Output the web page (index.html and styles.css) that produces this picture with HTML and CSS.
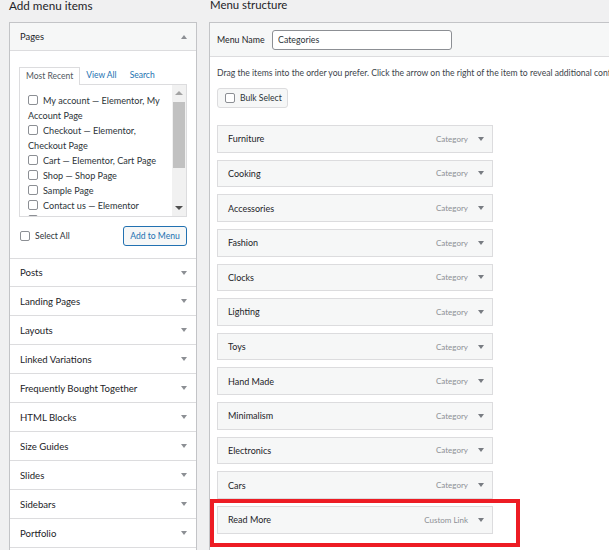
FILE: index.html
```html
<!DOCTYPE html>
<html>
<head>
<meta charset="utf-8">
<link rel="stylesheet" href="styles.css">
</head>
<body>
<div class="page">
  <div class="col-left">
    <h2 class="col-title">Add menu items</h2>
    <div class="acc">
      <div class="acc-head"><span>Pages</span><i class="tri up"></i></div>
      <div class="acc-body">
        <ul class="tabs">
          <li class="tab active">Most Recent</li>
          <li class="tab link">View All</li>
          <li class="tab link">Search</li>
        </ul>
        <div class="tab-panel">
          <ul class="checklist">
            <li><input type="checkbox" class="cb">My account — Elementor, My Account Page</li>
            <li><input type="checkbox" class="cb">Checkout — Elementor, Checkout Page</li>
            <li><input type="checkbox" class="cb">Cart — Elementor, Cart Page</li>
            <li><input type="checkbox" class="cb">Shop — Shop Page</li>
            <li><input type="checkbox" class="cb">Sample Page</li>
            <li><input type="checkbox" class="cb">Contact us — Elementor</li>
            <li><input type="checkbox" class="cb">Wishlist</li>
          </ul>
          <div class="scrollbar">
            <div class="sb-btn"><i class="sb-arrow up"></i></div>
            <div class="sb-thumb"></div>
            <div class="sb-space"></div>
            <div class="sb-btn"><i class="sb-arrow down"></i></div>
          </div>
        </div>
        <div class="actions">
          <label class="select-all"><input type="checkbox" class="cb">Select All</label>
          <button class="btn-add">Add to Menu</button>
        </div>
      </div>
      <div class="acc-row"><span>Posts</span><i class="tri"></i></div>
      <div class="acc-row"><span>Landing Pages</span><i class="tri"></i></div>
      <div class="acc-row"><span>Layouts</span><i class="tri"></i></div>
      <div class="acc-row"><span>Linked Variations</span><i class="tri"></i></div>
      <div class="acc-row"><span>Frequently Bought Together</span><i class="tri"></i></div>
      <div class="acc-row"><span>HTML Blocks</span><i class="tri"></i></div>
      <div class="acc-row"><span>Size Guides</span><i class="tri"></i></div>
      <div class="acc-row"><span>Slides</span><i class="tri"></i></div>
      <div class="acc-row"><span>Sidebars</span><i class="tri"></i></div>
      <div class="acc-row"><span>Portfolio</span><i class="tri"></i></div>
      <div class="acc-row"><span>Products</span><i class="tri"></i></div>
    </div>
  </div>
  <div class="col-right">
    <h2 class="col-title right">Menu structure</h2>
    <div class="menu-box">
      <div class="menu-head">
        <label class="menu-label">Menu Name</label>
        <input class="menu-name" type="text" value="Categories">
      </div>
      <div class="menu-body">
        <p class="hint">Drag the items into the order you prefer. Click the arrow on the right of the item to reveal additional configuration options.</p>
        <button class="bulk"><input type="checkbox" class="cb">Bulk Select</button>
        <ul class="menu-items">
          <li class="item"><span class="item-title">Furniture</span><span class="item-type">Category</span><i class="tri dark"></i></li>
          <li class="item"><span class="item-title">Cooking</span><span class="item-type">Category</span><i class="tri dark"></i></li>
          <li class="item"><span class="item-title">Accessories</span><span class="item-type">Category</span><i class="tri dark"></i></li>
          <li class="item"><span class="item-title">Fashion</span><span class="item-type">Category</span><i class="tri dark"></i></li>
          <li class="item"><span class="item-title">Clocks</span><span class="item-type">Category</span><i class="tri dark"></i></li>
          <li class="item"><span class="item-title">Lighting</span><span class="item-type">Category</span><i class="tri dark"></i></li>
          <li class="item"><span class="item-title">Toys</span><span class="item-type">Category</span><i class="tri dark"></i></li>
          <li class="item"><span class="item-title">Hand Made</span><span class="item-type">Category</span><i class="tri dark"></i></li>
          <li class="item"><span class="item-title">Minimalism</span><span class="item-type">Category</span><i class="tri dark"></i></li>
          <li class="item"><span class="item-title">Electronics</span><span class="item-type">Category</span><i class="tri dark"></i></li>
          <li class="item"><span class="item-title">Cars</span><span class="item-type">Category</span><i class="tri dark"></i></li>
          <li class="item marked"><span class="item-title">Read More</span><span class="item-type">Custom Link</span><i class="tri dark"></i><span class="highlight"></span></li>
        </ul>
      </div>
    </div>
  </div>
</div>
</body>
</html>
```

FILE: styles.css
```css
html, body {
  margin: 0;
  overflow: hidden;
}
body {
  width: 609px;
  height: 550px;
  background: #f0f0f1;
  font-family: Lato, "Noto Sans", sans-serif;
  color: #1d2327;
}
ul { list-style: none; margin: 0; padding: 0; }

.page {
  display: flex;
  align-items: flex-start;
  gap: 12px;
  padding-left: 9px;
}
.col-left { width: 188px; flex: none; }
.col-right { width: 640px; flex: none; }

.col-title {
  margin: 0;
  height: 22px;
  font-size: 11.7px;
  font-weight: 400;
  line-height: 10px;
  color: #1d2327;
  white-space: nowrap;
}
.col-title.right { padding-left: 1px; font-size: 11.4px; }

.cb {
  appearance: none;
  -webkit-appearance: none;
  box-sizing: border-box;
  width: 10px;
  height: 10px;
  margin: 0 5px 0 0;
  border: 1px solid #8c8f94;
  border-radius: 2px;
  background: #fff;
  vertical-align: -1px;
}

.tri {
  flex: none;
  width: 0;
  height: 0;
  border-left: 3.5px solid transparent;
  border-right: 3.5px solid transparent;
  border-top: 4px solid #8c8f94;
}
.tri.up {
  border-top: 0;
  border-bottom: 4px solid #8c8f94;
}
.tri.dark { border-top-color: #787c82; }

.acc {
  background: #fff;
  border: 1px solid #c3c4c7;
  border-bottom: 0;
}
.acc-head {
  box-sizing: border-box;
  height: 28px;
  background: #f6f7f7;
  border-bottom: 1px solid #dcdcde;
  display: flex;
  align-items: center;
  justify-content: space-between;
  padding: 0 9px 0 10px;
  font-size: 9.4px;
}
.acc-body {
  padding: 16px 9px 12px;
}
.tabs {
  display: flex;
  font-size: 8.5px;
  height: 17px;
  line-height: 16px;
}
.tab {
  padding: 0 6px;
  color: #2271b1;
}
.tab.active {
  color: #50575e;
  border: 1px solid #dcdcde;
  border-bottom: 0;
  background: #fff;
  box-sizing: border-box;
  height: 18px;
  margin-bottom: -1px;
  position: relative;
}
.tab.link + .tab.link { padding-left: 7px; }
.tab-panel {
  display: flex;
  height: 133px;
  box-sizing: border-box;
  border: 1px solid #dcdcde;
  overflow: hidden;
  background: #fff;
}
.checklist {
  flex: 1;
  padding: 8px 5px 0 8px;
  font-size: 9.1px;
  line-height: 15px;
  color: #2c3338;
}
.scrollbar {
  width: 14px;
  flex: none;
  display: flex;
  flex-direction: column;
  background: #f1f1f1;
}
.sb-btn {
  height: 16px;
  display: flex;
  align-items: center;
  justify-content: center;
}
.sb-arrow {
  width: 0;
  height: 0;
  border-left: 4px solid transparent;
  border-right: 4px solid transparent;
}
.sb-arrow.up { border-bottom: 4px solid #a3a3a3; }
.sb-arrow.down { border-top: 4px solid #505050; }
.sb-thumb {
  height: 66px;
  margin: 1px 1px 0;
  background: #c1c1c1;
}
.sb-space { flex: 1; }

.actions {
  margin-top: 9px;
  display: flex;
  align-items: center;
  justify-content: space-between;
  font-size: 8.6px;
}
.select-all {
  display: flex;
  align-items: center;
  padding-left: 1px;
  color: #2c3338;
}
.btn-add {
  height: 20px;
  width: 64px;
  padding: 0;
  border: 1px solid #2271b1;
  border-radius: 3px;
  background: #f6f7f7;
  color: #2271b1;
  font-family: inherit;
  font-size: 8.6px;
  white-space: nowrap;
}
.acc-row {
  height: 29px;
  box-sizing: border-box;
  border-bottom: 1px solid #dcdcde;
  display: flex;
  align-items: center;
  justify-content: space-between;
  padding: 0 9px 0 10px;
  font-size: 9.6px;
  color: #1d2327;
}
.acc-body + .acc-row { border-top: 1px solid #dcdcde; }

.menu-box {
  background: #fff;
  border: 1px solid #c3c4c7;
  height: 560px;
}
.menu-head {
  height: 34px;
  box-sizing: border-box;
  background: #f6f7f7;
  border-bottom: 1px solid #dcdcde;
  display: flex;
  align-items: center;
  gap: 8px;
  padding: 0 7px;
}
.menu-label {
  width: 47px;
  font-size: 8.8px;
  color: #1d2327;
  white-space: nowrap;
}
.menu-name {
  box-sizing: border-box;
  width: 180px;
  height: 20px;
  border: 1px solid #8c8f94;
  border-radius: 3px;
  padding: 0 5px;
  font-family: inherit;
  font-size: 8.8px;
  color: #2c3338;
  background: #fff;
}
.menu-body {
  padding: 10px 7px 0;
}
.hint {
  margin: 0;
  font-size: 8.6px;
  line-height: 12px;
  white-space: nowrap;
  color: #3c434a;
}
.bulk {
  margin-top: 9px;
  height: 20px;
  width: 71px;
  box-sizing: border-box;
  display: flex;
  align-items: center;
  padding: 0 0 0 7px;
  border: 1px solid #dcdcde;
  border-radius: 3px;
  background: #f6f7f7;
  font-family: inherit;
  font-size: 8.6px;
  color: #2c3338;
  white-space: nowrap;
}
.menu-items {
  margin-top: 17px;
  width: 276px;
  display: flex;
  flex-direction: column;
  gap: 7px;
}
.item {
  position: relative;
  height: 27.64px;
  box-sizing: border-box;
  border: 1px solid #dcdcde;
  background: #f6f7f7;
  display: flex;
  align-items: center;
  padding: 0 8px 0 10px;
}
.item-title {
  flex: 1;
  font-size: 9px;
  color: #1d2327;
}
.item-type {
  font-size: 8px;
  color: #8c8f94;
  margin-right: 10px;
}
.highlight {
  position: absolute;
  left: -8px;
  top: -8px;
  width: 310px;
  height: 48px;
  box-sizing: border-box;
  border: 4px solid #ed1c24;
}
```
